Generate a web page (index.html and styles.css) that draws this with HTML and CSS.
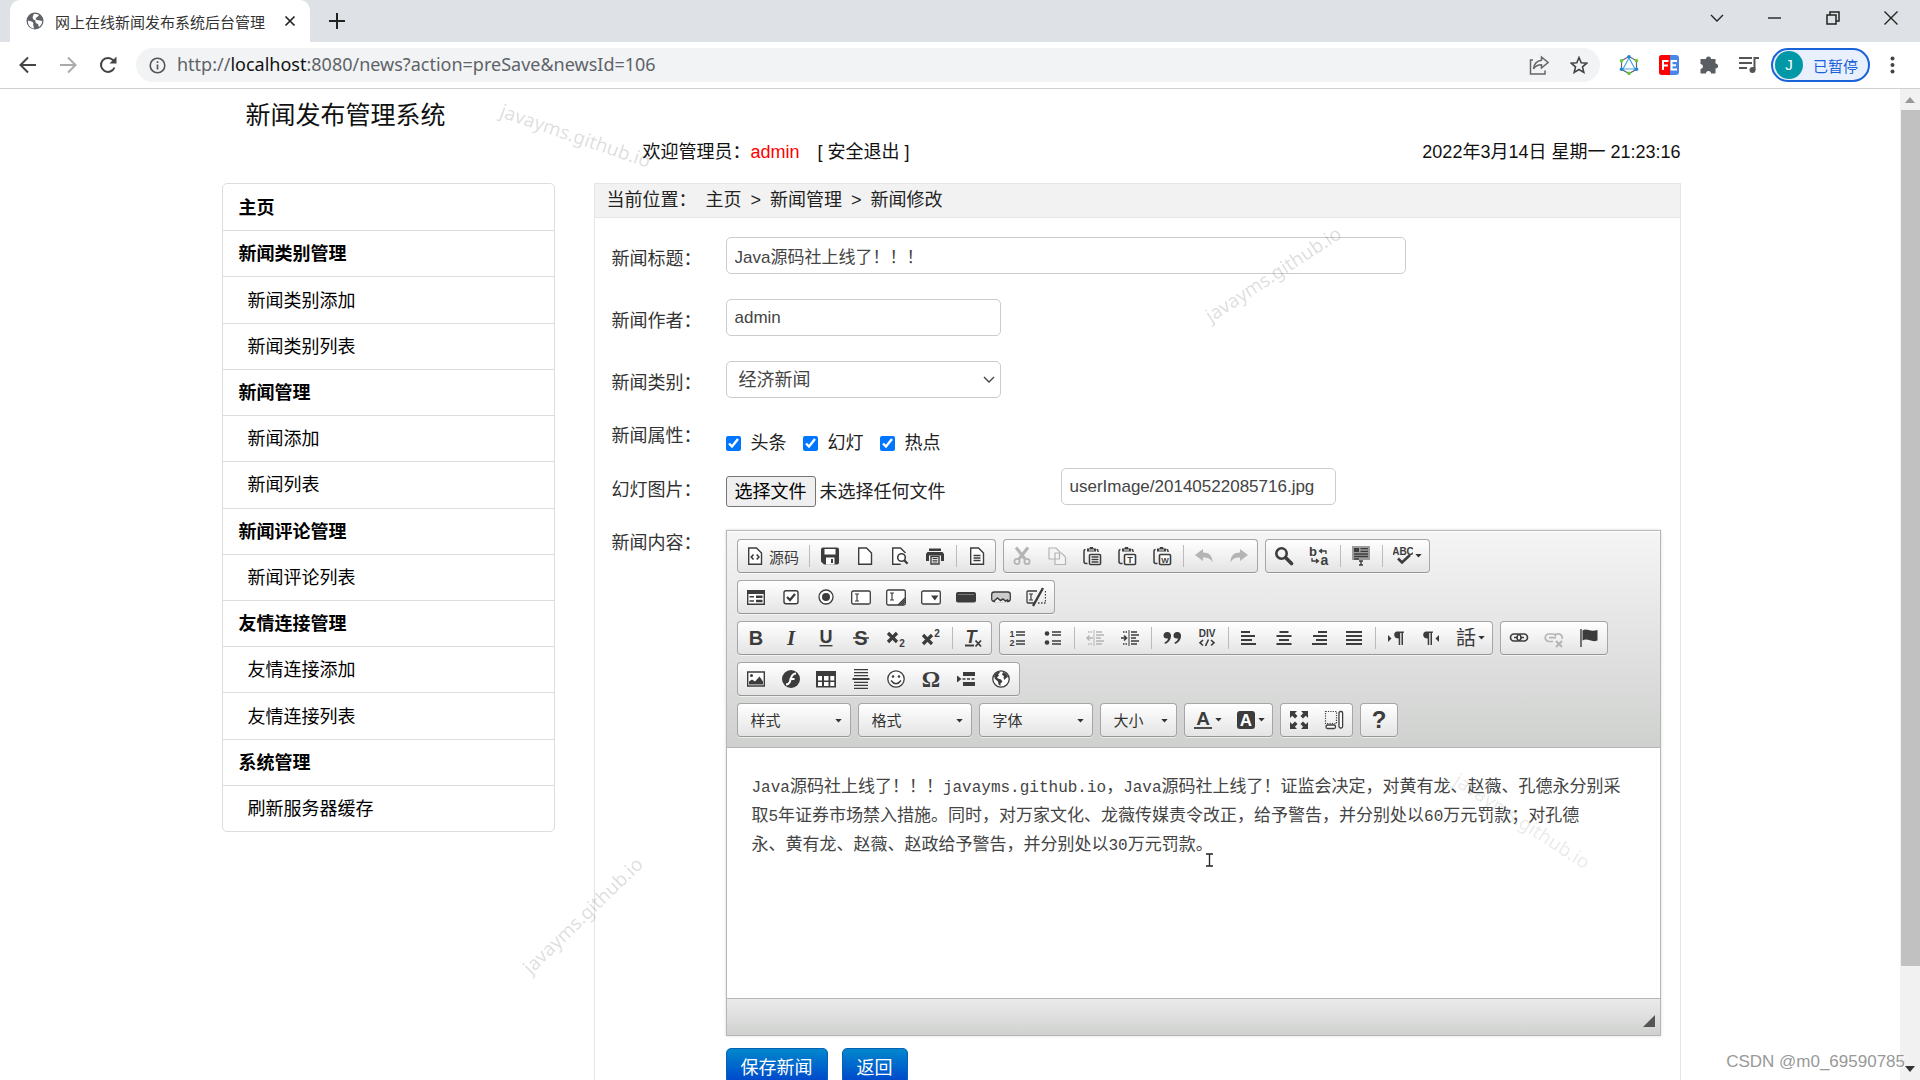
FILE: index.html
```html
<!DOCTYPE html>
<html lang="zh-CN">
<head>
<meta charset="utf-8">
<title>网上在线新闻发布系统后台管理</title>
<link rel="stylesheet" href="styles.css">
</head>
<body>
<svg class="sprite" aria-hidden="true">
  <defs>
    <symbol id="doc" viewBox="0 0 20 20"><path d="M3.700 2h7.800l5 5v11.200H3.700z" fill="#fff" stroke="currentColor" stroke-width="1.400"/></symbol>
    <symbol id="source" viewBox="0 0 20 20"><use href="#doc"/><path d="M8.500 8.500 6.300 11l2.200 2.500M11.700 8.500l2.200 2.500-2.200 2.500" fill="none" stroke="currentColor" stroke-width="1.600"/></symbol>
    <symbol id="save" viewBox="0 0 20 20"><path d="M3 1.500h14a2 2 0 0 1 2 2v13a2 2 0 0 1-2 2H4l-3-3v-12a2 2 0 0 1 2-2z" fill="currentColor"/><path d="M4.500 3h11v5.500h-11zM6 11.500h8.500v7H6z" fill="#fff"/><path d="M11 13h2v4h-2z" fill="currentColor"/></symbol>
    <symbol id="preview" viewBox="0 0 20 20"><path d="M15.500 7 10.500 2H2.700v16.200h8" fill="#fff" stroke="currentColor" stroke-width="1.400"/><circle cx="11.500" cy="11.500" r="3.800" fill="#fff" stroke="currentColor" stroke-width="1.600"/><path d="m14.300 14.300 3.200 3.500" stroke="currentColor" stroke-width="2.200"/></symbol>
    <symbol id="print" viewBox="0 0 20 20"><path d="M4 2.500h12v2.500H4zM2.500 6h15l1.500 2v7h-3V9.500H4V15H1V8z" fill="currentColor"/><path d="M6 10.500h8v7.500H6z" fill="#fff" stroke="currentColor" stroke-width="1.400"/><path d="M7.500 12.500h5M7.500 14.300h5M7.500 16h5" stroke="currentColor"/></symbol>
    <symbol id="templates" viewBox="0 0 20 20"><use href="#doc"/><path d="M6.500 9.500h7M6.500 12h7M6.500 14.500h7" stroke="currentColor" stroke-width="1.400"/></symbol>
    <symbol id="cut" viewBox="0 0 20 20"><path d="M4 1.500 13 13M16 1.500 7 13" stroke="currentColor" stroke-width="3"/><circle cx="5" cy="15.500" r="2.600" fill="none" stroke="currentColor" stroke-width="1.800"/><circle cx="15" cy="15.500" r="2.600" fill="none" stroke="currentColor" stroke-width="1.800"/></symbol>
    <symbol id="copy" viewBox="0 0 20 20"><path d="M2 2h7l3.500 3.500V13H2zM8 7h6.500L18.500 11v7.500H8z" fill="#f4f4f4" stroke="currentColor" stroke-width="1.200"/></symbol>
    <symbol id="clip" viewBox="0 0 20 20"><path d="M3.500 3.500q-1.500 0-1.500 1.500v10.500q0 2 2 2h1.500M14.500 3.500q1.500 0 1.500 1.500v1" fill="none" stroke="currentColor" stroke-width="1.500"/><path d="M5 2.500h2.500l.5-1.500h3l.5 1.500H14V5.500H5z" fill="currentColor"/><path d="M7 3.500h5v1H7z" fill="#fff"/><rect x="7.500" y="8.500" width="11" height="10" rx="1" fill="#fff" stroke="currentColor" stroke-width="1.600"/></symbol>
    <symbol id="paste" viewBox="0 0 20 20"><use href="#clip"/><path d="M9.500 11h7M9.500 13.500h7M9.500 16h7" stroke="currentColor" stroke-width="1.300"/></symbol>
    <symbol id="pastetext" viewBox="0 0 20 20"><use href="#clip"/><text x="13" y="16.800" font-size="9" class="g">T</text></symbol>
    <symbol id="pasteword" viewBox="0 0 20 20"><use href="#clip"/><text x="13" y="16.500" font-size="8" class="g">W</text></symbol>
    <symbol id="undo" viewBox="0 0 20 20"><path d="M1 9 9 3v3.500c6 0 9.500 3 9.500 10C16.500 12.500 14 11.500 9 11.500V15z" fill="currentColor"/></symbol>
    <symbol id="redo" viewBox="0 0 20 20"><path d="M19 9l-8-6v3.500c-6 0-9.500 3-9.500 10 2-4 4.500-5 9.500-5V15z" fill="currentColor"/></symbol>
    <symbol id="find" viewBox="0 0 20 20"><circle cx="7.500" cy="7.500" r="5.200" fill="none" stroke="currentColor" stroke-width="2.600"/><path d="m11.500 11.500 6 6" stroke="currentColor" stroke-width="3.600" stroke-linecap="round"/></symbol>
    <symbol id="replace" viewBox="0 0 20 20"><text x="4" y="10" font-size="13" class="g">b</text><text x="15.500" y="19" font-size="14" class="g">a</text><path d="M17 8V5h-6M13 3l-2.500 2L13 7M3 12v3h6M7 13l2.500 2L7 17" fill="none" stroke="currentColor" stroke-width="1.300"/></symbol>
    <symbol id="selectall" viewBox="0 0 20 20"><path d="M1 0h18v14H1z" fill="#9c9c9c"/><path d="M3 2h5v4H3z" fill="currentColor"/><path d="M9.500 2.700H17M9.500 5.300H17M3 8h14M3 10.500h14M3 13h5" stroke="currentColor" stroke-width="1.300"/><path d="M8 15h4M10 15v4M8 19h4" stroke="currentColor" stroke-width="1.400"/></symbol>
    <symbol id="spell" viewBox="0 0 20 20"><text x="10" y="9" class="g n">ABC</text><path d="m5 12.500 4 4L17 9" fill="none" stroke="currentColor" stroke-width="2.600"/></symbol>
    <symbol id="form" viewBox="0 0 20 20"><path d="M1.700 4h16.600v13.300H1.700z" fill="#fff" stroke="currentColor" stroke-width="1.400"/><path d="M1 3h18v4H1z" fill="currentColor"/><path d="M3.500 9.700H8M3.500 14H8" stroke="currentColor" stroke-width="1.400"/><path d="M10 9.700h6.500M10 14h6.500" stroke="currentColor" stroke-width="2.600"/></symbol>
    <symbol id="checkbox" viewBox="0 0 20 20"><rect x="3" y="3.700" width="14" height="13" rx="2" fill="#fff" stroke="currentColor" stroke-width="1.400"/><path d="m6 10 3 3 5-6" fill="none" stroke="currentColor" stroke-width="2.300"/></symbol>
    <symbol id="radio" viewBox="0 0 20 20"><circle cx="10" cy="10" r="7" fill="#fff" stroke="currentColor" stroke-width="1.300"/><circle cx="10" cy="10" r="4" fill="currentColor"/></symbol>
    <symbol id="textfield" viewBox="0 0 20 20"><rect x=".7" y="4" width="18.600" height="13" rx="1.500" fill="#fff" stroke="currentColor" stroke-width="1.300"/><path d="M4 7h4M6 7v7M4 14h4" stroke="currentColor" stroke-width="1.200"/></symbol>
    <symbol id="textarea" viewBox="0 0 20 20"><rect x=".7" y="3" width="18.600" height="15" rx="1.500" fill="#fff" stroke="currentColor" stroke-width="1.300"/><path d="M4 6h4M6 6v7M4 13h4M12 18l7-7M14 18l5-5M16 18l3-3" stroke="currentColor" stroke-width="1.200"/></symbol>
    <symbol id="selectfield" viewBox="0 0 20 20"><rect x=".7" y="4" width="18.600" height="13" rx="1.500" fill="#fff" stroke="currentColor" stroke-width="1.300"/><path d="M10 8.500h7.500l-3.700 5z" fill="currentColor"/></symbol>
    <symbol id="buttonfield" viewBox="0 0 20 20"><rect x="0" y="5" width="20" height="10.500" rx="2" fill="currentColor"/><path d="M2 7.500h16" stroke="#777"/></symbol>
    <symbol id="imagebutton" viewBox="0 0 20 20"><rect x=".7" y="5" width="18.600" height="9.500" rx="2.500" fill="#ccc" stroke="currentColor" stroke-width="1.300"/><path d="M4 15.500v-2l2.500-2.500 3 2.500 2.500-1.500 2 1.500 2-1v3z" fill="#f4f4f4"/><path d="M2.500 14.500 6.500 11l3 2.500 2.500-1.500 2.500 2 2-1 1.500 1.500" fill="none" stroke="currentColor" stroke-width="1.500"/></symbol>
    <symbol id="hidden" viewBox="0 0 20 20"><path d="M11 4H2q-1 0-1 1v10q0 1 1 1h6" fill="none" stroke="currentColor" stroke-width="1.300"/><path d="M3 7h4M5 7v6M3 13h4" stroke="currentColor" stroke-width="1.200"/><path d="M12 16h7.500V4" fill="none" stroke="currentColor" stroke-width="1.300" stroke-dasharray="1.500 1.500"/><path d="M7 19 17 1" stroke="currentColor" stroke-width="2.400"/></symbol>
    <symbol id="bold" viewBox="0 0 20 20"><text x="10" y="17" font-size="20" class="g">B</text></symbol>
    <symbol id="italic" viewBox="0 0 20 20"><text x="10" y="17" font-size="21" class="g s it">I</text></symbol>
    <symbol id="underline" viewBox="0 0 20 20"><text x="10" y="14.500" font-size="18" class="g">U</text><path d="M3.500 17.700h13" stroke="currentColor" stroke-width="1.400"/></symbol>
    <symbol id="strike" viewBox="0 0 20 20"><text x="10" y="17" font-size="20" class="g">S</text><path d="M2 10h16" stroke="currentColor" stroke-width="1.500"/></symbol>
    <symbol id="sub" viewBox="0 0 20 20"><path d="m2 5 9 9M11 5l-9 9" stroke="currentColor" stroke-width="3.200"/><text x="16" y="18.500" font-size="10" class="g">2</text></symbol>
    <symbol id="sup" viewBox="0 0 20 20"><path d="m2 7 9 9M11 7l-9 9" stroke="currentColor" stroke-width="3.200"/><text x="16" y="9" font-size="10" class="g">2</text></symbol>
    <symbol id="removeformat" viewBox="0 0 20 20"><text x="8" y="15" font-size="18" class="g it">T</text><path d="M2 17.500h9M12.500 12.500l5.500 6M18 12.500l-5.500 6" stroke="currentColor" stroke-width="1.800"/></symbol>
    <symbol id="numlist" viewBox="0 0 20 20"><text x="4" y="9" font-size="9" class="g">1</text><text x="4" y="18" font-size="9" class="g">2</text><path d="M8 4h9M8 7h9M8 13h9M8 16h9" stroke="currentColor" stroke-width="1.500"/></symbol>
    <symbol id="bullist" viewBox="0 0 20 20"><circle cx="4" cy="5.500" r="2.300" fill="currentColor"/><circle cx="4" cy="14.500" r="2.300" fill="currentColor"/><path d="M9 4h9M9 7h9M9 13h9M9 16h9" stroke="currentColor" stroke-width="1.500"/></symbol>
    <symbol id="dents" viewBox="0 0 20 20"><path d="M9 2v16" stroke="currentColor"/><path d="M11 4h6M11 7h8M11 10h5M11 13h8M11 16h6" stroke="currentColor" stroke-width="1.500"/><path d="M3 4h5M3 16h5" stroke="currentColor" stroke-width="1.400" stroke-dasharray="1.500 1"/></symbol>
    <symbol id="outdent" viewBox="0 0 20 20"><use href="#dents"/><path d="M8 10H2M4.500 7.500 2 10l2.500 2.500" fill="none" stroke="currentColor" stroke-width="1.400"/></symbol>
    <symbol id="indent" viewBox="0 0 20 20"><use href="#dents"/><path d="M1 10h5M4 7.500 6.500 10 4 12.500" fill="none" stroke="currentColor" stroke-width="1.600"/></symbol>
    <symbol id="quote" viewBox="0 0 20 20"><path d="M5 4a3.500 3.500 0 0 1 4 4c0 4-3 7-6 8l-.5-1.500C5 13 6 12 6 10.500 3 11 1.500 9.500 1.500 7.500 1.500 5.500 3 4 5 4zM15 4a3.500 3.500 0 0 1 4 4c0 4-3 7-6 8l-.5-1.500c2.500-1.500 3.500-2.500 3.500-4-3 .5-4.500-1-4.500-3S13 4 15 4z" fill="currentColor"/></symbol>
    <symbol id="div" viewBox="0 0 20 20"><text x="10" y="8.500" class="g n">DIV</text><path d="M6 12 3 14.800l3 2.700M14 12l3 2.800-3 2.700M11.500 11.500l-3 6.500" fill="none" stroke="currentColor" stroke-width="1.600"/></symbol>
    <symbol id="left" viewBox="0 0 20 20"><path d="M2 4h9M2 8h14M2 12h11M2 16h15" stroke="currentColor" stroke-width="2.200"/></symbol>
    <symbol id="center" viewBox="0 0 20 20"><path d="M5.500 4h9M2.500 8h15M5 12h10M2.500 16h15" stroke="currentColor" stroke-width="2.200"/></symbol>
    <symbol id="right" viewBox="0 0 20 20"><path d="M9 4h9M4 8h14M7 12h11M3 16h15" stroke="currentColor" stroke-width="2.200"/></symbol>
    <symbol id="justify" viewBox="0 0 20 20"><path d="M2 4h16M2 8h16M2 12h16M2 16h16" stroke="currentColor" stroke-width="2.200"/></symbol>
    <symbol id="pilcrow" viewBox="0 0 20 20"><path d="M11 3.500h7v1.300h-1V17h-1.500V5h-1.300v12h-1.500v-6.500c-2.500 0-4.500-1-4.500-3.500 0-2 1.300-3.500 2.800-3.500z" fill="currentColor"/></symbol>
    <symbol id="ltr" viewBox="0 0 20 20"><use href="#pilcrow"/><path d="m2 7 3.500 3.500L2 14z" fill="currentColor"/></symbol>
    <symbol id="rtl" viewBox="0 0 20 20"><use href="#pilcrow" x="-6"/><path d="M18 7l-3.500 3.500L18 14z" fill="currentColor"/></symbol>
    <symbol id="lang" viewBox="0 0 20 20"><text x="10" y="17" font-size="20" class="g cjk">話</text></symbol>
    <symbol id="link" viewBox="0 0 20 20"><rect x="1.500" y="6" width="10.500" height="7" rx="3.500" fill="none" stroke="currentColor" stroke-width="1.700"/><rect x="8" y="6" width="10.500" height="7" rx="3.500" fill="none" stroke="currentColor" stroke-width="1.700"/><path d="M5 9.500h3.500M11.500 9.500H15" stroke="currentColor" stroke-width="1.300"/></symbol>
    <symbol id="unlink" viewBox="0 0 20 20"><path d="M9 13.500H5a3.700 3.700 0 0 1 0-7.500h4a3.700 3.700 0 0 1 3 2M11 6h3a3.700 3.700 0 0 1 4 5M5 9.700h7" fill="none" stroke="currentColor" stroke-width="1.700"/><path d="m12 13 6 6M18 13l-6 6" stroke="currentColor" stroke-width="2"/></symbol>
    <symbol id="flag" viewBox="0 0 20 20"><path d="M2 1v18" stroke="currentColor" stroke-width="1.400"/><path d="M3.500 2.500c4-3 7 2 15-.5v10.500C12 15 9 9.500 3.500 12.500z" fill="currentColor"/></symbol>
    <symbol id="image" viewBox="0 0 20 20"><path d="M1.700 3h16.600v14H1.700z" fill="#fff" stroke="currentColor" stroke-width="1.400"/><circle cx="5.500" cy="6.500" r="1.500" fill="currentColor"/><path d="M3 15.500v-3l3-2 3 2 4.500-5 3.500 5v3z" fill="currentColor"/></symbol>
    <symbol id="flash" viewBox="0 0 20 20"><circle cx="10" cy="10" r="9" fill="currentColor"/><path d="M15 4.500c-5 0-5 5-6 8-.7 2-2 3-4 3M8.500 10h5" fill="none" stroke="#fff" stroke-width="2"/></symbol>
    <symbol id="table" viewBox="0 0 20 20"><path d="M0 2h20v16.500H0z" fill="currentColor"/><path d="M2 7h4v4.500H2zM8 7h4.500v4.500H8zM14.300 7h4v4.500h-4zM2 13h4v4H2zM8 13h4.500v4H8zM14.300 13h4v4h-4z" fill="#fff"/></symbol>
    <symbol id="hr" viewBox="0 0 20 20"><path d="M3 .7h14M3 3.700h14M3 6.700h14M3 13.300h14M3 16.300h14M3 19.300h14" stroke="currentColor" stroke-width="1.300"/><path d="M1.500 10h17" stroke="currentColor" stroke-width="2"/></symbol>
    <symbol id="smiley" viewBox="0 0 20 20"><circle cx="10" cy="10" r="8.200" fill="#fff" stroke="currentColor" stroke-width="1.300"/><circle cx="7" cy="7.500" r="1.300" fill="currentColor"/><circle cx="13" cy="7.500" r="1.300" fill="currentColor"/><path d="M5 11.500q5 6.500 10 0" fill="none" stroke="currentColor" stroke-width="1.500"/></symbol>
    <symbol id="omega" viewBox="0 0 20 20"><text x="10" y="18" font-size="23" class="g s">Ω</text></symbol>
    <symbol id="pagebreak" viewBox="0 0 20 20"><path d="M1 6.500 5.500 10 1 13.500z" fill="currentColor"/><path d="M7 3h12v4H7zM7 13h12v4H7z" fill="currentColor"/><path d="M6.500 10h13" stroke="currentColor" stroke-width="1.400" stroke-dasharray="3 1.500"/></symbol>
    <symbol id="iframe" viewBox="0 0 20 20"><circle cx="10" cy="10" r="8.200" fill="#fff" stroke="currentColor" stroke-width="1.300"/><path d="M3 7q2-4 5-4.500l1 1.500-2 1 1 1.500-2 2 1 1 3 1 1.500 2-2 2v2.500l-2-1.500-.5-3L4 10zM12 3q4 1 5 5l-2 1-1.500 2-1-2 .5-2-2-1z" fill="currentColor"/></symbol>
    <symbol id="color" viewBox="0 0 20 20"><text x="10" y="14.500" font-size="19" class="g">A</text><path d="M1 18h18" stroke="currentColor" stroke-width="1.800"/></symbol>
    <symbol id="bgcolor" viewBox="0 0 20 20"><rect x="1" y="1" width="18" height="18" rx="3" fill="currentColor"/><text x="10" y="16" font-size="17" class="g w">A</text></symbol>
    <symbol id="maximize" viewBox="0 0 20 20"><path d="M1 1h7L5.800 3.200 8.500 6 6 8.500 3.200 5.800 1 8zM19 1h-7l2.200 2.200L11.500 6 14 8.500l2.800-2.700L19 8zM1 19h7l-2.200-2.200L8.500 14 6 11.500l-2.800 2.700L1 12zM19 19h-7l2.200-2.200-2.700-2.800 2.500-2.500 2.800 2.700L19 12z" fill="currentColor"/></symbol>
    <symbol id="blocks" viewBox="0 0 20 20"><rect x="1.500" y="1.500" width="11" height="12" fill="none" stroke="currentColor" stroke-width="1.200" stroke-dasharray="1.200 1.200"/><rect x="15" y="1.500" width="3.600" height="16.500" rx="1.500" fill="#fff" stroke="currentColor" stroke-width="1.300"/><rect x="2" y="15" width="9.500" height="3.500" rx="1.500" fill="#fff" stroke="currentColor" stroke-width="1.300"/></symbol>
    <symbol id="help" viewBox="0 0 20 20"><text x="10" y="18" font-size="24" class="g">?</text></symbol>
    <symbol id="globe" viewBox="0 0 18 18"><circle cx="9" cy="9" r="8.500" fill="#5f6368"/><path d="M2 8.500c2 1 4 .5 5 2s-.5 2 .5 3.500l.5 2.500C4 16 1.500 12.500 2 8.500zM8 1.700 12.500 2.500c1 1.500-1 2-2 3S9 7.500 11 8s4 0 5.300 1.500C16 12 14.500 14 13 15l-1-3c-2-.5-3-2-2.500-3.500C7 8 6 6 7 4z" fill="#fff"/></symbol>
    <symbol id="caret" viewBox="0 0 8 5"><path d="M0 0h8L4 4.500z" fill="currentColor"/></symbol>
  </defs>
</svg>

<header class="chrome">
  <div class="tabstrip">
    <div class="tab">
      <svg class="fav"><use href="#globe"/></svg>
      <span class="tab-title">网上在线新闻发布系统后台管理</span>
      <button class="plain tab-x" aria-label="关闭标签页"><svg width="12" height="12" viewBox="0 0 12 12"><path d="m1.500 1.500 9 9M10.500 1.500l-9 9" stroke="#222" stroke-width="1.700"/></svg></button>
    </div>
    <button class="plain newtab" aria-label="新标签页"><svg width="16" height="16" viewBox="0 0 16 16"><path d="M8 0v16M0 8h16" stroke="#222" stroke-width="2"/></svg></button>
    <div class="winctl">
      <button class="plain" aria-label="搜索标签页"><svg width="14" height="14" viewBox="0 0 14 14"><path d="m1 4 6 6 6-6" fill="none" stroke="#222" stroke-width="1.400"/></svg></button>
      <button class="plain" aria-label="最小化"><svg width="14" height="14" viewBox="0 0 14 14"><path d="M0 7h13" stroke="#222" stroke-width="1.400"/></svg></button>
      <button class="plain" aria-label="还原"><svg width="14" height="14" viewBox="0 0 14 14"><path d="M1 4h9v9H1zM4 4V1h9v9h-3" fill="none" stroke="#222" stroke-width="1.500"/></svg></button>
      <button class="plain" aria-label="关闭"><svg width="14" height="14" viewBox="0 0 14 14"><path d="m.5.5 13 13M13.500.5l-13 13" stroke="#222" stroke-width="1.400"/></svg></button>
    </div>
  </div>
  <div class="navbar">
    <button class="plain nav" aria-label="后退"><svg width="18" height="18" viewBox="0 0 18 18"><path d="M17 9H2M9 1.500 1.500 9 9 16.500" fill="none" stroke="#444" stroke-width="2"/></svg></button>
    <button class="plain nav" aria-label="前进"><svg width="18" height="18" viewBox="0 0 18 18"><path d="M1 9h15M9 1.500 16.500 9 9 16.500" fill="none" stroke="#aaa" stroke-width="2"/></svg></button>
    <button class="plain nav" aria-label="重新加载"><svg width="18" height="18" viewBox="0 0 18 18"><path d="M15.500 11.500a7 7 0 1 1-1.300-7.300L16 6" fill="none" stroke="#444" stroke-width="2"/><path d="M17.500.5v7h-7z" fill="#444"/></svg></button>
    <div class="omnibox">
      <svg width="17" height="17" viewBox="0 0 17 17"><circle cx="8.500" cy="8.500" r="7.300" fill="none" stroke="#555" stroke-width="1.600"/><path d="M8.500 7.500v5M8.500 4.300v1.800" stroke="#555" stroke-width="1.700"/></svg>
      <span class="url">http://<b>localhost</b>:8080/news?action=preSave&amp;newsId=106</span>
      <button class="plain nav" aria-label="分享"><svg width="20" height="20" viewBox="0 0 20 20"><path d="M4 5H1.500v14H16v-3.500" fill="none" stroke="#666" stroke-width="1.500"/><path d="M12.500 2 19 7.500 12.500 13V9.800c-3.500 0-6 1-8 4 .5-4.500 3-8 8-8.600z" fill="none" stroke="#666" stroke-width="1.500"/></svg></button>
      <button class="plain nav" aria-label="收藏"><svg width="18" height="18" viewBox="0 0 18 18"><path d="m9 1.500 2.200 5.200 5.600.5-4.300 3.700 1.300 5.500L9 13.500l-4.800 2.900 1.300-5.500L1.200 7.200l5.600-.5z" fill="none" stroke="#444" stroke-width="1.600"/></svg></button>
    </div>
    <div class="exts">
      <button class="plain nav" aria-label="扩展 1"><svg width="20" height="20" viewBox="0 0 20 20"><path d="m10 1.500 7.500 4.300v8.500L10 18.500l-7.500-4.200V5.800z" fill="none" stroke="#667" stroke-width="1.200"/><path d="M10 3 4 14h12z" fill="none" stroke="#4aa6e8" stroke-width="1.200"/><g fill="#6c3"><circle cx="17.500" cy="5.800" r="1.800"/><circle cx="10" cy="18.300" r="1.800"/><circle cx="2.500" cy="5.800" r="1.800"/></g><g fill="#1d86d8"><circle cx="10" cy="1.800" r="1.800"/><circle cx="17.500" cy="14.300" r="1.800"/><circle cx="2.500" cy="14.300" r="1.800"/></g></svg></button>
      <button class="plain nav" aria-label="扩展 2"><svg width="20" height="20" viewBox="0 0 20 20"><rect width="20" height="20" rx="3" fill="#4a86e8"/><path d="M3 0h8v20H3q-3 0-3-3V3q0-3 3-3z" fill="#f00"/><path d="M4 15V6h5.500M4 10.500h5M18 6h-5.500v8.500H18M12.500 10.300H17" fill="none" stroke="#fff" stroke-width="2"/></svg></button>
      <button class="plain nav" aria-label="扩展程序"><svg width="20" height="20" viewBox="0 0 20 20"><path d="M7 4a2.500 2.500 0 0 1 5 0h4.500v4.500a2.500 2.500 0 0 1 0 5v5H12a2.500 2.500 0 0 0-5 0H1.500V14a2.500 2.500 0 0 0 0-5V4z" fill="#5a5d61"/></svg></button>
      <button class="plain nav" aria-label="媒体"><svg width="20" height="20" viewBox="0 0 20 20"><path d="M0 3h13M0 8h13M0 13h8" stroke="#555" stroke-width="2"/><path d="M15.500 15V3H20" fill="none" stroke="#555" stroke-width="2"/><circle cx="13.500" cy="15" r="3" fill="#555"/></svg></button>
    </div>
    <button class="profile"><span class="avatar">J</span>已暂停</button>
    <button class="plain nav" aria-label="菜单"><svg width="5" height="18" viewBox="0 0 5 18"><g fill="#444"><circle cx="2.500" cy="2.500" r="2"/><circle cx="2.500" cy="9" r="2"/><circle cx="2.500" cy="15.500" r="2"/></g></svg></button>
  </div>
</header>

<div class="view">
  <div class="page">
    <div class="wrap">
      <div class="brand"><h1>新闻发布管理系统</h1></div>
      <div class="welcome">
        <span>欢迎管理员：<em>admin</em></span>
        <a href="#">[ 安全退出 ]</a>
        <span class="clock">2022年3月14日 星期一 21:23:16</span>
      </div>
      <div class="cols">
        <nav class="side">
          <a class="head" href="#">主页</a>
          <a class="head" href="#">新闻类别管理</a>
          <a href="#">新闻类别添加</a>
          <a href="#">新闻类别列表</a>
          <a class="head" href="#">新闻管理</a>
          <a href="#">新闻添加</a>
          <a href="#">新闻列表</a>
          <a class="head" href="#">新闻评论管理</a>
          <a href="#">新闻评论列表</a>
          <a class="head" href="#">友情连接管理</a>
          <a href="#">友情连接添加</a>
          <a href="#">友情连接列表</a>
          <a class="head" href="#">系统管理</a>
          <a href="#">刷新服务器缓存</a>
        </nav>
        <main class="panel">
          <div class="crumbs"><span>当前位置：</span><a href="#">主页</a><i>&gt;</i><a href="#">新闻管理</a><i>&gt;</i><span>新闻修改</span></div>
          <form class="form">
            <div class="row"><label for="t">新闻标题：</label><input class="box wide" id="t" value="Java源码社上线了！！！"></div>
            <div class="row"><label for="a">新闻作者：</label><input class="box" id="a" value="admin"></div>
            <div class="row"><label for="c">新闻类别：</label><span class="selwrap"><select class="box" id="c"><option>经济新闻</option></select><svg class="chev" width="12" height="8" viewBox="0 0 12 8"><path d="m1 1 5 5 5-5" fill="none" stroke="#444" stroke-width="1.400"/></svg></span></div>
            <div class="row attrs"><span class="lbl">新闻属性：</span><div class="checks"><label><input type="checkbox" checked>头条</label><label><input type="checkbox" checked>幻灯</label><label><input type="checkbox" checked>热点</label></div></div>
            <div class="row slides"><label for="img">幻灯图片：</label><div class="file"><button type="button">选择文件</button><span>未选择任何文件</span></div><input class="box" id="img" value="userImage/20140522085716.jpg"></div>
            <div class="row last"><span class="lbl">新闻内容：</span>
              <div class="editor">
                <div class="tools">
                  <div class="line">
                    <div class="grp"><button type="button" class="src"><svg><use href="#source"/></svg>源码</button><hr><button type="button" aria-label="保存"><svg><use href="#save"/></svg></button><button type="button" aria-label="新建"><svg><use href="#doc"/></svg></button><button type="button" aria-label="预览"><svg><use href="#preview"/></svg></button><button type="button" aria-label="打印"><svg><use href="#print"/></svg></button><hr><button type="button" aria-label="模板"><svg><use href="#templates"/></svg></button></div>
                    <div class="grp"><button type="button" class="off" aria-label="剪切"><svg><use href="#cut"/></svg></button><button type="button" class="off" aria-label="复制"><svg><use href="#copy"/></svg></button><button type="button" aria-label="粘贴"><svg><use href="#paste"/></svg></button><button type="button" aria-label="粘贴为文本"><svg><use href="#pastetext"/></svg></button><button type="button" aria-label="从 Word 粘贴"><svg><use href="#pasteword"/></svg></button><hr><button type="button" class="off" aria-label="撤消"><svg><use href="#undo"/></svg></button><button type="button" class="off" aria-label="重做"><svg><use href="#redo"/></svg></button></div>
                    <div class="grp"><button type="button" aria-label="查找"><svg><use href="#find"/></svg></button><button type="button" aria-label="替换"><svg><use href="#replace"/></svg></button><hr><button type="button" aria-label="全选"><svg><use href="#selectall"/></svg></button><hr><button type="button" class="drop" aria-label="拼写检查"><svg><use href="#spell"/></svg><svg class="car"><use href="#caret"/></svg></button></div>
                  </div>
                  <div class="line">
                    <div class="grp"><button type="button" aria-label="表单"><svg><use href="#form"/></svg></button><button type="button" aria-label="复选框"><svg><use href="#checkbox"/></svg></button><button type="button" aria-label="单选按钮"><svg><use href="#radio"/></svg></button><button type="button" aria-label="单行文本"><svg><use href="#textfield"/></svg></button><button type="button" aria-label="多行文本"><svg><use href="#textarea"/></svg></button><button type="button" aria-label="列表"><svg><use href="#selectfield"/></svg></button><button type="button" aria-label="按钮"><svg><use href="#buttonfield"/></svg></button><button type="button" aria-label="图像按钮"><svg><use href="#imagebutton"/></svg></button><button type="button" aria-label="隐藏域"><svg><use href="#hidden"/></svg></button></div>
                  </div>
                  <div class="line">
                    <div class="grp"><button type="button" aria-label="加粗"><svg><use href="#bold"/></svg></button><button type="button" aria-label="倾斜"><svg><use href="#italic"/></svg></button><button type="button" aria-label="下划线"><svg><use href="#underline"/></svg></button><button type="button" aria-label="删除线"><svg><use href="#strike"/></svg></button><button type="button" aria-label="下标"><svg><use href="#sub"/></svg></button><button type="button" aria-label="上标"><svg><use href="#sup"/></svg></button><hr><button type="button" aria-label="清除格式"><svg><use href="#removeformat"/></svg></button></div>
                    <div class="grp"><button type="button" aria-label="编号列表"><svg><use href="#numlist"/></svg></button><button type="button" aria-label="项目列表"><svg><use href="#bullist"/></svg></button><hr><button type="button" class="off" aria-label="减少缩进"><svg><use href="#outdent"/></svg></button><button type="button" aria-label="增加缩进"><svg><use href="#indent"/></svg></button><hr><button type="button" aria-label="块引用"><svg><use href="#quote"/></svg></button><button type="button" aria-label="DIV 容器"><svg><use href="#div"/></svg></button><hr><button type="button" aria-label="左对齐"><svg><use href="#left"/></svg></button><button type="button" aria-label="居中"><svg><use href="#center"/></svg></button><button type="button" aria-label="右对齐"><svg><use href="#right"/></svg></button><button type="button" aria-label="两端对齐"><svg><use href="#justify"/></svg></button><hr><button type="button" aria-label="从左到右"><svg><use href="#ltr"/></svg></button><button type="button" aria-label="从右到左"><svg><use href="#rtl"/></svg></button><button type="button" class="drop" aria-label="语言"><svg><use href="#lang"/></svg><svg class="car"><use href="#caret"/></svg></button></div>
                    <div class="grp"><button type="button" aria-label="超链接"><svg><use href="#link"/></svg></button><button type="button" class="off" aria-label="取消超链接"><svg><use href="#unlink"/></svg></button><button type="button" aria-label="锚点"><svg><use href="#flag"/></svg></button></div>
                  </div>
                  <div class="line">
                    <div class="grp"><button type="button" aria-label="图像"><svg><use href="#image"/></svg></button><button type="button" aria-label="Flash"><svg><use href="#flash"/></svg></button><button type="button" aria-label="表格"><svg><use href="#table"/></svg></button><button type="button" aria-label="水平线"><svg><use href="#hr"/></svg></button><button type="button" aria-label="表情"><svg><use href="#smiley"/></svg></button><button type="button" aria-label="特殊符号"><svg><use href="#omega"/></svg></button><button type="button" aria-label="分页符"><svg><use href="#pagebreak"/></svg></button><button type="button" aria-label="IFrame"><svg><use href="#iframe"/></svg></button></div>
                  </div>
                  <div class="line">
                    <div class="grp combo"><select aria-label="样式"><option>样式</option></select><svg class="car"><use href="#caret"/></svg></div>
                    <div class="grp combo"><select aria-label="格式"><option>格式</option></select><svg class="car"><use href="#caret"/></svg></div>
                    <div class="grp combo"><select aria-label="字体"><option>字体</option></select><svg class="car"><use href="#caret"/></svg></div>
                    <div class="grp combo small"><select aria-label="大小"><option>大小</option></select><svg class="car"><use href="#caret"/></svg></div>
                    <div class="grp"><button type="button" class="drop" aria-label="文本颜色"><svg><use href="#color"/></svg><svg class="car"><use href="#caret"/></svg></button><button type="button" class="drop" aria-label="背景颜色"><svg><use href="#bgcolor"/></svg><svg class="car"><use href="#caret"/></svg></button></div>
                    <div class="grp"><button type="button" aria-label="全屏"><svg><use href="#maximize"/></svg></button><button type="button" aria-label="显示区块"><svg><use href="#blocks"/></svg></button></div>
                    <div class="grp"><button type="button" aria-label="关于"><svg><use href="#help"/></svg></button></div>
                  </div>
                </div>
                <div class="content" contenteditable="true" role="textbox" aria-label="新闻内容" spellcheck="false"><p><span>Java</span>源码社上线了！！！<span>javayms.github.io</span>，<span>Java</span>源码社上线了！证监会决定，对黄有龙、赵薇、孔德永分别采<br>取<span>5</span>年证券市场禁入措施。同时，对万家文化、龙薇传媒责令改正，给予警告，并分别处以<span>60</span>万元罚款；对孔德<br>永、黄有龙、赵薇、赵政给予警告，并分别处以<span>30</span>万元罚款。</p></div>
                <div class="status"><svg width="12" height="12" viewBox="0 0 12 12"><path d="M12 0v12H0z" fill="#555"/></svg></div>
              </div>
            </div>
            <div class="actions"><button type="button">保存新闻</button><button type="button">返回</button></div>
          </form>
        </main>
      </div>
    </div>
    <span class="wm wm1">javayms.github.io</span>
    <span class="wm wm2">javayms.github.io</span>
    <span class="wm wm3">javayms.github.io</span>
    <span class="wm wm4">javayms.github.io</span>
    <svg class="ibeam" width="9" height="14" viewBox="0 0 9 14"><path d="M1 1h7M4.500 1v12M1 13h7" stroke="#222" stroke-width="1.300"/></svg>
  </div>
  <div class="scroll">
    <svg width="10" height="6" viewBox="0 0 10 6"><path d="M0 6h10L5 0z" fill="#999"/></svg>
    <div class="thumb"></div>
    <svg width="10" height="6" viewBox="0 0 10 6"><path d="M0 0h10L5 6z" fill="#333"/></svg>
  </div>
  <span class="credit">CSDN @m0_69590785</span>
</div>
</body>
</html>
```
FILE: styles.css
```css
* { box-sizing: border-box; }
body {
  margin: 0;
  height: 100vh;
  display: flex;
  flex-direction: column;
  overflow: hidden;
  background: #fff;
  color: #222;
  font-family: "Liberation Sans", "Noto Sans CJK SC", sans-serif;
  font-size: 18px;
}
a { color: inherit; text-decoration: none; }
button, input, select { font: inherit; color: inherit; margin: 0; }
.sprite { position: absolute; width: 0; height: 0; }
.plain { border: 0; background: none; padding: 0; display: flex; align-items: center; justify-content: center; }

/* glyphs inside the toolbar icons */
symbol { overflow: visible; }
.g { font-family: "Liberation Sans", sans-serif; font-weight: 700; text-anchor: middle; fill: currentColor; }
.g.s { font-family: "Liberation Serif", serif; }
.g.n { font-family: "Liberation Sans Narrow", "Liberation Sans", sans-serif; font-size: 10px; }
.g.it { font-style: italic; }
.g.w { fill: #fff; }
.g.cjk { font-family: "Noto Sans CJK TC", sans-serif; font-weight: 400; }

/* browser frame */
.chrome { flex: none; border-bottom: 1px solid #d0d0d0; }
.tabstrip { display: flex; height: 42px; background: #dee1e6; padding-left: 10px; }
.tab { width: 300px; display: flex; align-items: center; background: #fff; border-radius: 10px 10px 0 0; padding: 0 12px 0 16px; }
.fav { width: 18px; height: 18px; margin-right: 11px; flex: none; }
.tab-title { flex: 1; font-size: 15px; color: #333; white-space: nowrap; }
.tab-x { width: 17px; }
.newtab { width: 54px; }
.winctl { margin-left: auto; display: flex; height: 36px; }
.winctl button { width: 58px; }
.navbar { display: flex; align-items: center; height: 46px; padding: 0 8px; }
.nav { width: 40px; height: 34px; flex: none; }
.omnibox { flex: 1; margin: 0 9px 0 8px; height: 34px; border-radius: 17px; background: #f1f3f4; display: flex; align-items: center; padding: 0 1px 0 13px; }
.url { flex: 1; margin-left: 11px; padding-bottom: 2px; font-family: "Noto Sans", sans-serif; font-size: 18px; line-height: 24px; color: #5f6368; }
.url b { font-weight: 400; color: #111; }
.exts { display: flex; }
.profile { height: 34px; width: 99px; margin: 0 2px; padding: 0 0 0 2px; display: flex; align-items: center; gap: 10px; border: 2px solid #1a62d8; border-radius: 17px; background: #e8f0fe; color: #1a62d8; font-size: 15px; white-space: nowrap; }
.avatar { width: 28px; height: 28px; border-radius: 50%; background: #0097a7; color: #fff; line-height: 28px; text-align: center; flex: none; }

/* page */
.view { flex: 1; min-height: 0; display: flex; position: relative; }
.page { flex: 1; position: relative; overflow: hidden; padding-left: 2px; }
.wrap { max-width: 1459px; margin: 0 auto; }
.brand { padding: 8px 0 0 24px; }
.brand h1 { margin: 0; font-size: 25px; line-height: 36px; font-weight: 400; color: #111; }
.welcome { display: flex; gap: 18px; padding: 7px 0 19px 421px; line-height: 24px; color: #111; }
.welcome em { font-style: normal; color: red; }
.clock { margin-left: auto; }
.cols { display: grid; grid-template-columns: 333px minmax(0, 1fr); gap: 39px; align-items: start; }
.side { display: flex; flex-direction: column; min-height: 649px; border: 1px solid #ddd; border-radius: 5px; color: #000; }
.side a { flex: 1 0 46px; display: flex; align-items: center; padding: 0 0 3px 25px; border-top: 1px solid #ddd; }
.side a:first-child { border-top: 0; }
.side .head { padding-left: 16px; font-weight: 700; }
.panel { border: 1px solid #e5e5e5; }
.crumbs { display: flex; gap: 9px; height: 34px; line-height: 32px; align-items: baseline; padding-left: 12px; background: #f2f2f2; border-bottom: 1px solid #e5e5e5; }
.crumbs i { font-style: normal; }
.form { padding: 19px 19px 40px 17px; }
.row { display: flex; align-items: flex-start; margin-bottom: 25px; }
.row > label, .lbl { width: 114px; flex: none; line-height: 26px; padding-top: 9px; color: #333; }
.box { width: 275px; height: 37px; border: 1px solid #ccc; border-radius: 5px; background: #fff; padding: 0 8px; color: #444; font-size: 17px; }
.box.wide { width: 680px; }
.selwrap { position: relative; }
select { appearance: none; }
select.box { padding-left: 12px; display: block; font-size: 18px; }
.chev { position: absolute; right: 6px; top: 15px; }
.row.attrs { margin-bottom: 0; min-height: 45px; }
.attrs .lbl, .last .lbl { padding-top: 0; }
.checks { display: flex; gap: 16px; padding-top: 8px; line-height: 24px; }
.checks label { display: flex; align-items: center; gap: 10px; }
.checks input { width: 15px; height: 15px; accent-color: #0075ff; }
.row.slides { margin-bottom: 23px; }
.file { width: 335px; padding-top: 8px; display: flex; align-items: center; gap: 4px; line-height: 28px; }
.file button { height: 31px; width: 90px; padding: 0; border: 1px solid #767676; border-radius: 3px; background: #efefef; color: #000; }

/* rich text editor */
.row.last { margin-bottom: 12px; }
.editor { flex: 1; border: 1px solid #b6b6b6; box-shadow: 0 0 3px rgba(0, 0, 0, .15); }
.tools { display: flex; flex-direction: column; gap: 7px; padding: 8px 10px 10px; border-bottom: 1px solid #b6b6b6; background: linear-gradient(#f5f5f5, #cfd1cf); box-shadow: inset 0 1px 0 #fff; }
.line { display: flex; gap: 7px; }
.grp { display: flex; align-items: center; height: 34px; padding-left: 1px; border: 1px solid #a6a6a6; border-bottom-color: #979797; border-radius: 4px; background: linear-gradient(#fff, #e4e4e4); box-shadow: 0 1px 0 rgba(255, 255, 255, .6); }
.grp hr { width: 1px; height: 22px; margin: 0 3px; border: 0; background: #bbb; }
.grp button { width: 35px; height: 32px; padding: 0; border: 0; background: none; display: flex; align-items: center; justify-content: center; color: #3c3c3c; }
.grp svg { width: 20px; height: 20px; flex: none; }
.grp .off { color: #b4b4b4; }
.grp .src { width: 67px; gap: 4px; font-size: 15px; }
.grp .drop { width: 43px; gap: 2px; }
.grp .car { width: 7px; height: 4px; color: #333; }
.combo { position: relative; width: 114px; padding: 0; }
.combo.small { width: 77px; }
.combo select { width: 100%; height: 32px; border: 0; background: none; padding: 0 0 0 13px; font-size: 15px; color: #333; }
.combo .car { position: absolute; right: 8px; top: 15px; }
.content { min-height: 250px; padding: 25px; outline: 0; background: #fff; font-size: 17px; line-height: 28px; color: #444; }
.content p { margin: 0; white-space: nowrap; }
.content span { font-family: "Liberation Mono", monospace; font-size: 16px; }
.status { display: flex; justify-content: flex-end; align-items: flex-end; height: 37px; padding: 0 5px 8px; border-top: 1px solid #b6b6b6; background: linear-gradient(#ebebeb, #cfd1cf); }
.actions { display: flex; gap: 14px; padding-left: 114px; }
.actions button { height: 36px; padding: 0 14px; border: 1px solid #0560b8; border-radius: 5px; background: linear-gradient(#08c, #04c); color: #fff; }

/* overlays */
.wm { position: absolute; font-family: "Noto Sans", sans-serif; font-size: 19px; line-height: 24px; color: rgba(0, 0, 0, .15); transform-origin: 0 50%; pointer-events: none; }
.wm1 { left: 501px; top: 9px; transform: rotate(19deg); }
.wm2 { left: 1207px; top: 216px; transform: rotate(-33deg); }
.wm3 { left: 526px; top: 869px; transform: rotate(-44deg); }
.wm4 { left: 1456px; top: 677px; transform: rotate(33deg); opacity: .6; }
.ibeam { position: absolute; left: 1205px; top: 764px; }
.scroll { width: 20px; display: flex; flex-direction: column; align-items: center; background: #f1f1f1; padding: 8px 0; }
.thumb { width: 19px; flex: 0 1 856px; margin: 7px 0 auto; background: #c1c1c1; }
.credit { position: absolute; right: 15px; bottom: 8px; font-size: 17px; line-height: 20px; color: #999; text-shadow: 1px 1px 0 #fff; }
```
